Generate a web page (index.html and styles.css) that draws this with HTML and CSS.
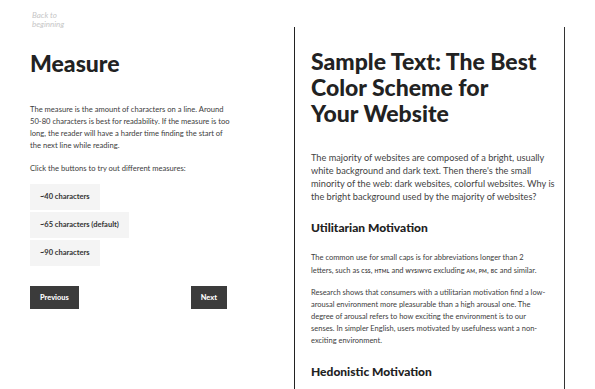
FILE: index.html
```html
<!DOCTYPE html>
<html>
<head>
<meta charset="utf-8">
<link rel="stylesheet" href="styles.css">
</head>
<body>
<div class="page">
  <div class="controls">
    <a class="back" href="#">Back to<br>beginning</a>
    <h1 class="title">Measure</h1>
    <p class="desc">The measure is the amount of characters on a line. Around 50-80 characters is best for readability. If the measure is too long, the reader will have a harder time finding the start of the next line while reading.</p>
    <p class="desc">Click the buttons to try out different measures:</p>
    <div class="options">
      <button class="opt">~40 characters</button>
      <button class="opt">~65 characters (default)</button>
      <button class="opt">~90 characters</button>
    </div>
    <div class="nav">
      <button class="navbtn">Previous</button>
      <button class="navbtn">Next</button>
    </div>
  </div>
  <div class="sample">
    <h1 class="stitle">Sample Text: The Best Color Scheme for Your&nbsp;Website</h1>
    <p class="lead">The majority of websites are composed of a bright, usually white background and dark text. Then there's the small minority of the web: dark websites, colorful websites. Why is the bright background used by the majority of websites?</p>
    <h2 class="sub">Utilitarian Motivation</h2>
    <p class="small">The common use for small caps is for abbreviations longer than 2 letters, such as <span class="sc">css</span>, <span class="sc">html</span> and <span class="sc">wysiwyg</span> excluding <span class="sc">am</span>, <span class="sc">pm</span>, <span class="sc">bc</span> and similar.</p>
    <p class="small">Research shows that consumers with a utilitarian motivation find a low-arousal environment more pleasurable than a high arousal one. The degree of arousal refers to how exciting the environment is to our senses. In simpler English, users motivated by usefulness want a non-exciting environment.</p>
    <h2 class="sub">Hedonistic Motivation</h2>
  </div>
</div>
</body>
</html>
```

FILE: styles.css
```css
html, body {
  margin: 0;
  padding: 0;
  background: #fff;
  overflow: hidden;
}
body {
  font-family: "Lato", "Open Sans", sans-serif;
  color: #3d3d3d;
}
.page {
  display: flex;
  align-items: flex-start;
  height: 389px;
}
.controls {
  width: 264px;
  padding: 11px 0 0 30px;
  flex: none;
}
.back {
  display: block;
  margin-left: 2px;
  font-size: 8px;
  line-height: 8.5px;
  font-style: italic;
  color: #c6c6c6;
  text-decoration: none;
}
.title {
  margin: 22px 0 0;
  font-size: 23px;
  line-height: 26px;
  font-weight: 900;
  color: #222;
}
.desc {
  margin: 26.5px 0 0;
  width: 200px;
  font-size: 7.6px;
  line-height: 12px;
  color: #3d3d3d;
}
.desc + .desc {
  margin-top: 11px;
}
.options {
  margin-top: 10px;
  display: flex;
  flex-direction: column;
  align-items: flex-start;
  gap: 2px;
}
.opt {
  border: 0;
  background: #f4f4f4;
  font-family: inherit;
  font-size: 7.5px;
  font-weight: 700;
  color: #333;
  height: 26px;
  padding: 0 10px;
  text-align: left;
}
.nav {
  margin-top: 20px;
  width: 197px;
  display: flex;
  justify-content: space-between;
}
.navbtn {
  border: 0;
  background: #3b3b3b;
  color: #fff;
  font-family: inherit;
  font-size: 7.4px;
  font-weight: 900;
  height: 23px;
  padding: 0 10px;
}
.sample {
  margin-top: 27px;
  width: 253px;
  height: 400px;
  border-left: 1px solid #222;
  border-right: 1px solid #333;
  padding: 21px 0 0 16px;
  flex: none;
}
.stitle {
  margin: 0;
  width: 240px;
  font-size: 23px;
  line-height: 26px;
  font-weight: 900;
  color: #222;
}
.lead {
  margin: 25px 0 0;
  width: 248px;
  font-size: 9.2px;
  line-height: 13px;
  color: #444;
}
.sub {
  margin: 17px 0 0;
  font-size: 12px;
  line-height: 16px;
  font-weight: 900;
  color: #222;
}
.small {
  margin: 16px 0 0;
  width: 236px;
  font-size: 7.5px;
  line-height: 12.5px;
  color: #3d3d3d;
}
.small + .small {
  margin-top: 10px;
  line-height: 12px;
}
.small + .sub {
  margin-top: 17px;
}
.sc {
  font-variant: all-small-caps;
  font-weight: 700;
  letter-spacing: 0.03em;
}
```
